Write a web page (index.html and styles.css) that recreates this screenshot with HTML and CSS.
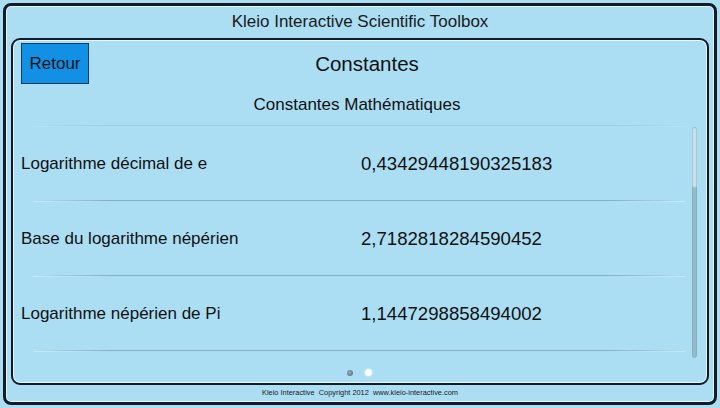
FILE: index.html
```html
<!DOCTYPE html>
<html lang="fr">
<head>
<meta charset="utf-8">
<title>Kleio Interactive Scientific Toolbox</title>
<link rel="stylesheet" href="styles.css">
</head>
<body>
<div class="frame">
  <div class="app-title">Kleio Interactive Scientific Toolbox</div>
  <div class="panel">
    <div class="header">
      <button class="back">Retour</button>
      <div class="page-title">Constantes</div>
    </div>
    <div class="section-title">Constantes Mathématiques</div>
    <div class="list-wrap">
      <div class="sep sep-top"></div>
      <div class="list">
        <div class="row">
          <div class="label">Logarithme décimal de e</div>
          <div class="value">0,43429448190325183</div>
        </div>
        <div class="sep"></div>
        <div class="row">
          <div class="label">Base du logarithme népérien</div>
          <div class="value">2,7182818284590452</div>
        </div>
        <div class="sep"></div>
        <div class="row">
          <div class="label">Logarithme népérien de Pi</div>
          <div class="value">1,1447298858494002</div>
        </div>
        <div class="sep"></div>
      </div>
      <div class="scrollbar"><div class="thumb"></div></div>
    </div>
    <div class="dots">
      <span class="dot dot-off"></span>
      <span class="dot dot-on"></span>
    </div>
  </div>
  <div class="footer">Kleio Interactive&nbsp; Copyright 2012&nbsp; www.kleio-interactive.com</div>
</div>
</body>
</html>
```
FILE: styles.css
```css
* { box-sizing: border-box; }
html, body {
  margin: 0;
  padding: 0;
  width: 720px;
  height: 408px;
  background: #abdef3;
  font-family: "Liberation Sans", Arial, sans-serif;
  color: #111;
  overflow: hidden;
}
.frame {
  margin: 3px;
  height: 402px;
  border: 3px solid #121b27;
  border-radius: 8px;
  box-shadow: inset 0 0 0 1px #e6f7fd;
  display: flex;
  flex-direction: column;
  padding: 0 5px;
}
.app-title {
  height: 32px;
  line-height: 31px;
  text-align: center;
  font-size: 17px;
  color: #1a1a1a;
  flex: none;
}
.panel {
  flex: 1;
  border: 2px solid #121b27;
  border-radius: 9px;
  box-shadow: inset 0 0 0 1px #e6f7fd;
  display: flex;
  flex-direction: column;
  padding: 3px 8px 0 8px;
  position: relative;
}
.header {
  display: flex;
  align-items: center;
  height: 41px;
}
.back {
  width: 68px;
  height: 41px;
  background: #1190e6;
  border: 1px solid #123a5a;
  border-radius: 0;
  font-family: inherit;
  font-size: 17px;
  color: #111;
  padding: 0;
  flex: none;
}
.page-title {
  flex: 1;
  text-align: center;
  font-size: 20.5px;
  padding-right: 54px;
}
.section-title {
  text-align: center;
  font-size: 17px;
  height: 40px;
  line-height: 39px;
  margin-top: 1px;
  padding-right: 6px;
}
.list-wrap {
  position: relative;
}
.sep {
  height: 2px;
  margin: 0 14px 0 12px;
  background: linear-gradient(to right, rgba(110,165,190,0) 0%, #7eb2ca 12%, #7eb2ca 88%, rgba(110,165,190,0) 100%);
  border-bottom: 1px solid rgba(215,242,252,0.6);
}
.sep-top {
  opacity: 0.35;
}
.row {
  display: grid;
  grid-template-columns: 340px 1fr;
  align-items: center;
  height: 73px;
  padding-top: 1px;
}
.label {
  font-size: 17px;
}
.value {
  font-size: 18.6px;
}
.scrollbar {
  position: absolute;
  right: 2px;
  top: 2px;
  width: 5px;
  height: 231px;
  border-radius: 3px;
  background: #93bbcb;
  border: 1px solid #86aebf;
}
.thumb {
  height: 61px;
  border-radius: 3px;
  background: #c9e0ea;
  margin: -1px;
  border: 1px solid #a8c6d3;
}
.dots {
  display: flex;
  justify-content: center;
  align-items: center;
  gap: 12px;
  padding-top: 17px;
  padding-right: 2px;
}
.dot {
  width: 6px;
  height: 6px;
  border-radius: 50%;
}
.dot-off {
  background: radial-gradient(circle at 40% 40%, #9aa8b0, #5a6870);
}
.dot-on {
  width: 7px;
  height: 7px;
  background: radial-gradient(circle, #ffffff 55%, #e8f6fc);
  box-shadow: 0 0 2px #ffffff;
}
.footer {
  flex: none;
  height: 17px;
  line-height: 16px;
  text-align: center;
  font-size: 7.4px;
  color: #1a1a1a;
}
```
